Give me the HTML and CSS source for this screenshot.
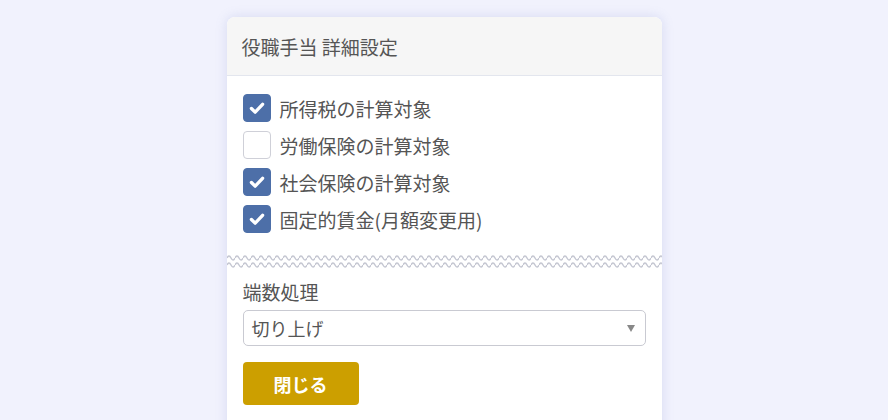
FILE: index.html
```html
<!DOCTYPE html>
<html lang="ja">
<head>
    <meta charset="UTF-8">
    <title>役職手当 詳細設定</title>
    <link rel="stylesheet" href="styles.css">
</head>
<body>
    <div class="card">
        <div class="card-header">役職手当 詳細設定</div>

        <div class="card-body">
            <label class="check-row">
                <span class="box checked"><svg viewBox="0 0 28 28"><path d="M8 14.5l4 4 8-8.5" /></svg></span>
                <span>所得税の計算対象</span>
            </label>
            <label class="check-row">
                <span class="box"></span>
                <span>労働保険の計算対象</span>
            </label>
            <label class="check-row">
                <span class="box checked"><svg viewBox="0 0 28 28"><path d="M8 14.5l4 4 8-8.5" /></svg></span>
                <span>社会保険の計算対象</span>
            </label>
            <label class="check-row">
                <span class="box checked"><svg viewBox="0 0 28 28"><path d="M8 14.5l4 4 8-8.5" /></svg></span>
                <span>固定的賃金(月額変更用)</span>
            </label>
        </div>

        <!-- wavy separator -->
        <svg class="wave" width="100%" height="16">
            <defs>
                <pattern id="zig" width="8" height="16" patternUnits="userSpaceOnUse">
                    <path d="M0 5 Q2 1 4 5 T8 5 M0 12 Q2 8 4 12 T8 12" />
                </pattern>
            </defs>
            <rect width="100%" height="16" fill="url(#zig)" />
        </svg>

        <div class="card-body lower">
            <div class="field-label">端数処理</div>
            <div class="select">
                <span>切り上げ</span>
                <span class="caret"></span>
            </div>
            <button class="close-btn">閉じる</button>
        </div>
    </div>
</body>
</html>
```

FILE: styles.css
```css
body {
    margin: 0;
    font-family: "Noto Sans CJK JP", "Noto Sans", sans-serif;
    background: #f1f2fd;
    color: #555;
    height: 420px;
    overflow: hidden;
}

.card {
    width: 435px;
    margin: 17px auto 0;
    background: #fff;
    border-radius: 8px 8px 0 0;
    box-shadow: 0 0 12px rgba(120, 130, 200, 0.22);
    height: 420px;
}

.card-header {
    height: 59px;
    box-sizing: border-box;
    padding: 0 15px;
    display: flex;
    align-items: center;
    font-size: 19px;
    background: #f6f6f6;
    border-bottom: 1px solid #e3e6ee;
    border-radius: 8px 8px 0 0;
}

.card-body {
    padding: 18px 16px 0;
    display: flex;
    flex-direction: column;
    gap: 9px;
}

.check-row {
    display: flex;
    align-items: center;
    gap: 9px;
    font-size: 19px;
    height: 28px;
}

.box {
    width: 28px;
    height: 28px;
    box-sizing: border-box;
    border: 1px solid #cfd0d8;
    border-radius: 4px;
    background: #fff;
    display: flex;
}

.box.checked {
    background: #4d6fa8;
    border-color: #4d6fa8;
}

.box svg {
    width: 26px;
    height: 26px;
}

.box svg path {
    fill: none;
    stroke: #fff;
    stroke-width: 3.6;
    stroke-linecap: round;
    stroke-linejoin: round;
}

.wave {
    display: block;
    margin-top: 20px;
}

.wave path {
    fill: none;
    stroke: #c5c7d2;
    stroke-width: 1.5;
}

.lower {
    padding-top: 10px;
    gap: 0;
}

.field-label {
    font-size: 19px;
    line-height: 26px;
    margin-bottom: 5px;
}

.select {
    height: 36px;
    box-sizing: border-box;
    border: 1px solid #c9cad2;
    border-radius: 5px;
    display: flex;
    align-items: center;
    justify-content: space-between;
    padding: 0 10px 0 8px;
    font-size: 18px;
}

.caret {
    width: 0;
    height: 0;
    border-left: 4.5px solid transparent;
    border-right: 4.5px solid transparent;
    border-top: 7px solid #888;
}

.close-btn {
    align-self: flex-start;
    margin-top: 16px;
    width: 116px;
    height: 43px;
    border: none;
    border-radius: 4px;
    background: #cc9f00;
    color: #fff;
    font-family: inherit;
    font-size: 18px;
    font-weight: bold;
}
```
